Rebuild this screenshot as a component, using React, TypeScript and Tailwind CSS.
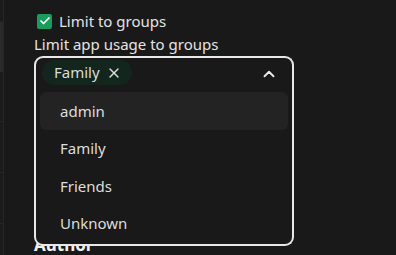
import { Check, X, ChevronUp } from 'lucide-react';

const groups = ['admin', 'Family', 'Friends', 'Unknown'];

function Sidebar() {
  return (
    <aside className="w-[4px] shrink-0 border-r border-[#262626] bg-[#1b1b1b] flex flex-col">
      <div className="h-[22px] border-b border-[#222]" />
      <div className="h-[50px] bg-[#2a2a2a]" />
      <div className="h-[50px] border-b border-[#262626]" />
      <div className="h-[51px] border-b border-[#262626]" />
      <div className="h-[51px] border-b border-[#262626]" />
    </aside>
  );
}

function GroupSelect() {
  return (
    <div className="relative w-[260px]">
      <div className="h-[32px] border-2 border-b-0 border-[#e8e8e8] rounded-t-[9px] pl-[6px] pr-[14px] pt-[2px] flex items-start justify-between">
        <span className="h-[25px] pl-[12px] pr-[10px] rounded-full bg-[#13261d] text-[#dcdcdc] text-[15px] flex items-center gap-[6px]">
          Family
          <X size={16} strokeWidth={2} className="text-[#e0e0e0]" />
        </span>
        <ChevronUp size={18} strokeWidth={2.5} className="mt-[5px] text-[#e8e8e8]" />
      </div>
      <ul className="absolute left-0 right-0 top-[32px] border-2 border-t-0 border-[#e8e8e8] rounded-b-[9px] bg-[#191919] px-[4px] pt-[4px] pb-[2px] z-10">
        {groups.map((g, i) => (
          <li
            key={g}
            className={
              'h-[37.5px] pl-[20px] flex items-center text-[15px] text-[#dedede] rounded-[6px] ' +
              (i === 0 ? 'bg-[#232323]' : '')
            }
          >
            {g}
          </li>
        ))}
      </ul>
    </div>
  );
}

export default function App() {
  return (
    <div className="w-[396px] h-[255px] bg-[#191919] flex overflow-hidden font-['Noto_Sans',sans-serif]">
      <Sidebar />
      <main className="pl-[30px] pt-[12px]">
        <label className="flex items-center gap-[7px] pl-[3px] text-[15px] text-[#e4e4e4] leading-[18px]">
          <span className="w-[15px] h-[15px] rounded-[2px] bg-[#1a9c5e] flex items-center justify-center">
            <Check size={12} strokeWidth={3.5} className="text-white" />
          </span>
          Limit to groups
        </label>
        <p className="mt-[4px] text-[15px] text-[#e4e4e4] leading-[20px]">Limit app usage to groups</p>
        <div className="mt-[2px]">
          <GroupSelect />
        </div>
        <h3 className="mt-[146px] text-[17px] font-bold text-[#f0f0f0] leading-[22px]">Author</h3>
      </main>
    </div>
  );
}
